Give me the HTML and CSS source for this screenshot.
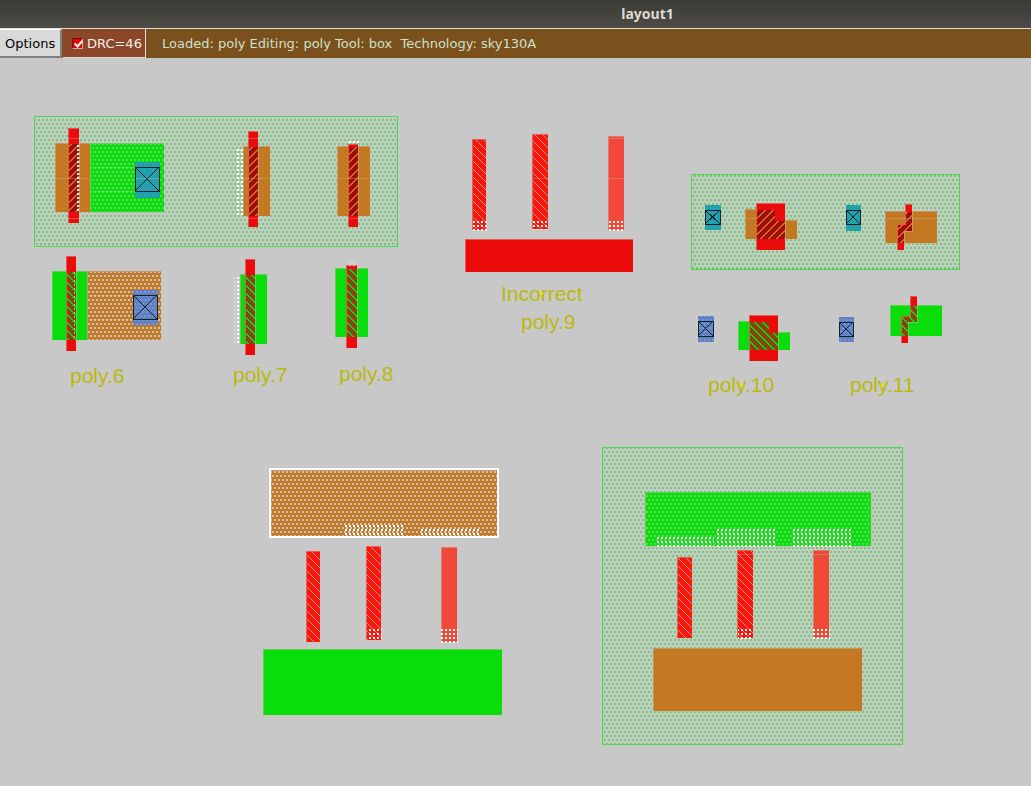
FILE: index.html
```html
<!DOCTYPE html>
<html lang="en">
<head>
<meta charset="utf-8">
<title>layout1</title>
<link rel="stylesheet" href="styles.css">
</head>
<body>
<header class="titlebar"><h1 class="title">layout1</h1></header>
<nav class="toolbar">
  <button class="options" type="button">Options</button>
  <label class="drc"><input class="drc-check" type="checkbox" checked><span>DRC=46</span></label>
  <p class="status">Loaded: poly Editing: poly Tool: box&nbsp; Technology: sky130A</p>
</nav>
<main class="canvas">
<svg class="drawing" viewBox="0 58 1031 728" role="img" aria-label="Poly rule test layout">
  <defs>
    <pattern id="well" width="4" height="8" patternUnits="userSpaceOnUse" y="3"><path class="well-dot" d="M0 0h2v2H0zM2 4h2v2H2z"/></pattern>
    <pattern id="holes" width="4" height="8" patternUnits="userSpaceOnUse" y="3"><path class="hole" d="M0 0h2v2H0zM2 4h2v2H2z"/></pattern>
    <pattern id="blue" width="4" height="8" patternUnits="userSpaceOnUse" y="3"><path class="blue-dot" d="M0 0h2v2H0zM2 4h2v2H2z"/></pattern>
    <pattern id="err" width="4" height="4" patternUnits="userSpaceOnUse" x="1" y="1"><path class="err-dot" d="M0 0h2v2H0z"/></pattern>
    <pattern id="pgate" width="8" height="8" patternUnits="userSpaceOnUse"><path class="p-line" d="M6 0h2v1H6zM5 1h2v1H5zM4 2h2v1H4zM3 3h2v1H3zM2 4h2v1H2zM1 5h2v1H1zM0 6h2v1H0zM0 7h1v1H0zM7 7h1v1H7z"/></pattern>
    <pattern id="ngate" width="8" height="8" patternUnits="userSpaceOnUse"><path class="n-line" d="M0 0h2v1H0zM1 1h2v1H1zM2 2h2v1H2zM3 3h2v1H3zM4 4h2v1H4zM5 5h2v1H5zM6 6h2v1H6zM7 7h1v1H7zM0 7h1v1H0z"/></pattern>
    <pattern id="res" width="8" height="8" patternUnits="userSpaceOnUse"><path class="r-line" d="M0 0h1v1H0zM1 1h1v1H1zM2 2h1v1H2zM3 3h1v1H3zM4 4h1v1H4zM5 5h1v1H5zM6 6h1v1H6zM7 7h1v1H7z"/></pattern>
    <pattern id="cross" width="16" height="16" patternUnits="userSpaceOnUse"><path class="x-line" d="M15 0h1v1h-1zM14 1h1v1h-1zM13 2h1v1h-1zM12 3h1v1h-1zM11 4h1v1h-1zM10 5h1v1h-1zM9 6h1v1H9zM8 7h1v1H8zM7 8h1v1H7zM6 9h1v1H6zM5 10h1v1H5zM4 11h1v1H4zM3 12h1v1H3zM2 13h1v1H2zM1 14h1v1H1zM0 15h1v1H0z"/></pattern>
  </defs>

  <path fill="url(#well)" d="M34 116H397V246H34zM691 174H959V269H691zM602 447H902V744H602z"/>
  <path class="well-edge" d="M34 116H397V246H34zM691 174H959V269H691zM602 447H902V744H602z"/>

  <g class="shape">
    <path class="pdiff" d="M55 143H90V212H55zM243 146H270V216H243zM337 146H370V216H337z"/>
    <path class="ndiff" d="M90 143H164V212H90z"/>
    <path class="ndiff" d="M52 271H87V340H52zM240 274H267V344H240zM335 268H368V337H335z"/>
    <path class="pdiff" d="M87 271H161V340H87z"/>
    <path class="pdiff" d="M745 209H775V220H797V239H745zM885 211H937V243H885z"/>
    <path class="ndiff" d="M738 321H769V332H790V350H738zM890 305H942V336H890z"/>
    <path class="pdiff" d="M271 470H497V536H271zM653 648H862V711H653z"/>
    <path class="ndiff" d="M263 649H502V715H263zM645 492H871V546H645z"/>
    <path class="poly" d="M68 128H79V223H68zM248 131H258V227H248zM348 144H358V227H348z"/>
    <path class="poly" d="M66 256H76V351H66zM245 259H255V355H245zM346 265H357V348H346z"/>
    <path class="poly" d="M465 239H633V272H465zM756 203H785V250H756zM749 315H778V361H749z"/>
    <path class="poly" d="M905 204H912V231H904V250H897V224H905zM910 296H917V322H908V343H901V316H910z"/>
  </g>

  <path fill="url(#well)" d="M91 144H164V212H91zM646 493H871V546H646z"/>
  <path fill="url(#holes)" d="M88 272H161V340H88zM271 470H497V536H271z"/>

  <g class="pgate">
    <path d="M69 144H79V212H69zM249 147H258V216H249zM349 147H358V216H349zM757 210H775V221H785V239H757zM906 212H912V231H904V243H898V225H906z"/>
  </g>
  <g class="ngate">
    <path d="M67 272H76V340H67zM246 275H255V344H246zM347 269H357V337H347zM750 322H769V333H778V350H750zM911 306H917V322H908V336H902V317H911z"/>
  </g>
  <path fill="url(#pgate)" d="M69 144H79V212H69zM249 147H258V216H249zM349 147H358V216H349zM757 210H775V221H785V239H757zM906 212H912V231H904V243H898V225H906z"/>
  <path fill="url(#ngate)" d="M67 272H76V340H67zM246 275H255V344H246zM347 269H357V337H347zM750 322H769V333H778V350H750zM911 306H917V322H908V336H902V317H911z"/>

  <g class="shape">
    <path class="resistor" d="M472 139H486V230H472zM532 134H548V229H532zM306 551H320V642H306zM366 546H381V640H366zM677 557H692V638H677zM737 550H753V638H737z"/>
    <path class="light" d="M608 136H624V230H608zM441 547H457V642H441z"/>
    <path class="light in-well" d="M813 550H829V638H813z"/>
  </g>
  <path fill="url(#cross)" d="M473 140H486V230H473zM307 552H320V642H307zM678 558H692V638H678z"/>
  <path fill="url(#res)" d="M473 140H486V230H473zM533 135H548V229H533zM307 552H320V642H307zM367 547H381V640H367zM678 558H692V638H678zM738 551H753V638H738z"/>

  <g class="teal">
    <path class="metal" d="M135 162H160V198H135zM705 205H721V230H705zM846 205H861V231H846z"/>
    <path class="cut" d="M135 167H159V191H135zL159 191M159 167L135 191M705 210H720V224H705zL720 224M720 210L705 224M846 210H860V224H846zL860 224M860 210L846 224"/>
  </g>
  <g class="slate">
    <path class="metal" d="M133 290H158V325H133zM698 316H714V342H698zM839 317H854V342H839z"/>
    <path fill="url(#blue)" d="M133 290H158V325H133zM698 316H714V342H698zM839 317H854V342H839z"/>
    <path class="cut" d="M133 295H157V319H133zL157 319M157 295L133 319M698 321H713V336H698zL713 336M713 321L698 336M839 322H853V336H839zL853 336M853 322L839 336"/>
  </g>

  <path fill="url(#err)" d="M77 145H79V212H77zM237 147H243V216H237zM349 141H359V143H349z"/>
  <path class="faint" fill="url(#err)" d="M234 275H236V344H234zM347 262H357V263H347zM347 265H357V266H347z"/>
  <path fill="url(#err)" d="M237 275H239V344H237z"/>
  <path fill="url(#err)" d="M472 221H487V231H472zM532 221H549V230H532zM608 221H625V231H608zM367 629H382V641H367zM441 629H458V643H441zM738 629H753V639H738zM813 629H830V639H813z"/>
  <path fill="url(#err)" d="M345 525H403V536H345zM421 527H479V536H421zM657 537H714V547H657zM717 529H775V547H717zM793 529H851V547H793z"/>
  <path class="slit" d="M74 272V340"/>
  <path class="seam" d="M56 178H90M244 178H270M338 178H370M609 178H624M533 178H548M69 138H79M249 138H258M69 218H79M249 218H258M349 218H358M609 138H624M91 167H135M91 191H135M136 178H160M88 295H133M88 319H133M746 218H756M886 218H938M738 554H753M814 554H829"/>
  <path class="cursor-box" d="M270 469H498V537H270z"/>

  <g class="labels">
    <text x="70" y="383">poly.6</text>
    <text x="233" y="382">poly.7</text>
    <text x="339" y="381">poly.8</text>
    <text x="501" y="301">Incorrect</text>
    <text x="521" y="329">poly.9</text>
    <text x="708" y="392">poly.10</text>
    <text x="850" y="392">poly.11</text>
  </g>
  <path class="anchor" d="M539 293h5M541 291v5M739 385h5M741 383v5M879 385h5M881 383v5"/>
</svg>
</main>
</body>
</html>
```
FILE: styles.css
```css
* { box-sizing: border-box; }
body {
  margin: 0;
  min-height: 100vh;
  display: flex;
  flex-direction: column;
  background: #c8c8c8;
  font-family: "DejaVu Sans", sans-serif;
  font-size: 13px;
}
.titlebar {
  height: 28px;
  padding-left: 264px;
  display: flex;
  align-items: center;
  justify-content: center;
  background: linear-gradient(#3b3a36, #4c4b45);
}
.title {
  margin: 0;
  color: #dfdbd2;
  font: bold 14px/28px "Noto Sans", "Open Sans", sans-serif;
}
.toolbar {
  height: 30px;
  display: flex;
  align-items: stretch;
  background: #7a501c;
  border-top: 1px solid #e4ddd4;
}
.options {
  width: 62px;
  padding: 0 6px 0 5px;
  border: solid;
  border-width: 1px 2px 2px 0;
  border-color: #fff #808080 #808080 #fff;
  background: #d9d9d9;
  color: #000;
  font: inherit;
  text-align: left;
  white-space: nowrap;
}
.drc {
  display: flex;
  align-items: center;
  gap: 4px;
  margin-left: 1px;
  padding: 0 3px 0 9px;
  width: 83px;
  border: solid #e6d8d0;
  border-width: 0 1px 1px 0;
  background: #8c4628;
  color: #f5f0ee;
  white-space: nowrap;
}
.drc-check {
  appearance: none;
  flex: none;
  width: 11px;
  height: 11px;
  margin: 0;
  border: solid 1px;
  border-color: #4a2012 #d8a898 #d8a898 #4a2012;
  background: #f00000;
  position: relative;
}
.drc-check:checked::after {
  content: "";
  position: absolute;
  left: 3px;
  top: 0;
  width: 3px;
  height: 6px;
  border: solid #fff;
  border-width: 0 2px 2px 0;
  transform: rotate(42deg);
}
.status {
  margin: 0;
  padding-left: 16px;
  color: #cfe0cc;
  line-height: 29px;
  white-space: nowrap;
}
.canvas { flex: 1; background: #c8c8c8; }
.drawing { display: block; width: 100%; height: auto; shape-rendering: crispEdges; }

.well-dot { fill: #5fd65f; }
.hole { fill: #c8c8c8; }
.blue-dot { fill: #6496f0; }
.err-dot { fill: #fff; }
.faint { opacity: .6; }
.p-line { fill: #c47822; }
.n-line { fill: #0ade0a; }
.r-line { fill: #b496a8; }
.x-line { fill: #dc3200; }
.well-edge { fill: none; stroke: #4fd84f; }
.shape path { stroke: rgba(200, 190, 180, .45); }
.shape .pdiff { fill: #c47822; }
.shape .ndiff { fill: #0ade0a; }
.shape .poly { fill: #eb0b0b; }
.shape .resistor { fill: #ff1408; }
.shape .light { fill: #f2483c; }
.shape .in-well { fill: #ee4836; }
.pgate path { fill: #a50a0a; }
.ngate path { fill: #8c4110; }
.teal .metal { fill: #22a0ac; }
.slate .metal { fill: #6680b8; }
.cut { fill: none; stroke: #10202c; }
.slit { fill: none; stroke: #e8d8d0; stroke-dasharray: 2 2; opacity: .7; }
.seam { fill: none; stroke: #d2d2c8; opacity: .3; }
.cursor-box { fill: none; stroke: #fff; stroke-width: 2; stroke-linejoin: round; }
.labels text { font: 21px "Liberation Sans", Arial, sans-serif; fill: #b9b90c; }
.anchor { fill: none; stroke: #e6e600; }
```
